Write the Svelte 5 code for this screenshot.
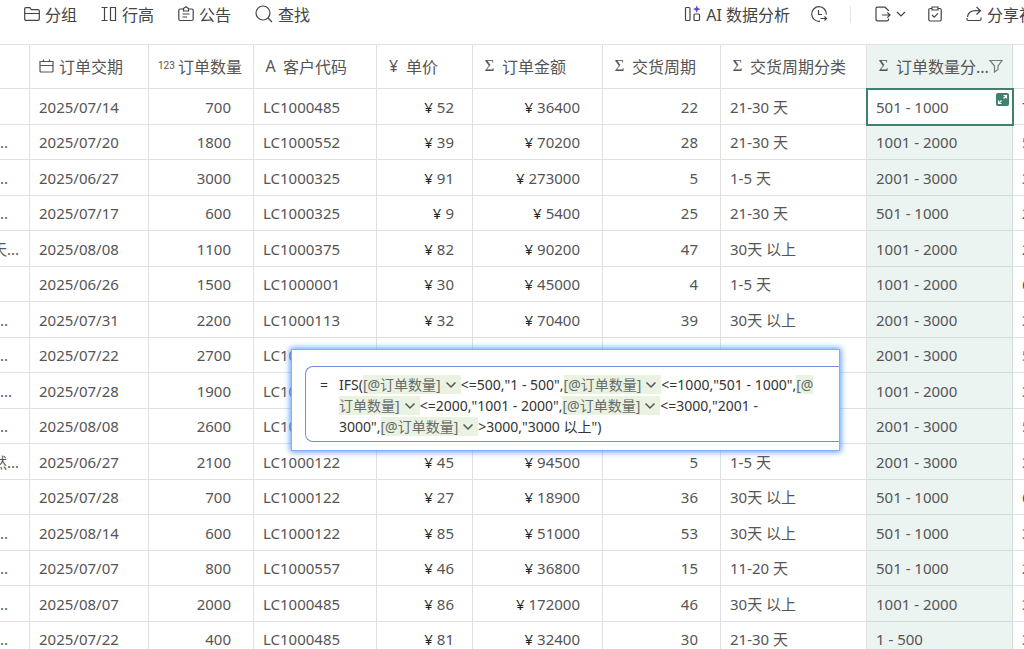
<script>
	// column definitions: kind picks the small glyph in front of the title
	const columns = [
		{ key: 'date', title: '订单交期', kind: 'date' },
		{ key: 'count', title: '订单数量', kind: 'number', align: 'right' },
		{ key: 'client', title: '客户代码', kind: 'text' },
		{ key: 'price', title: '单价', kind: 'money', align: 'right money' },
		{ key: 'total', title: '订单金额', kind: 'formula', align: 'right' },
		{ key: 'cycle', title: '交货周期', kind: 'formula', align: 'right' },
		{ key: 'cycleType', title: '交货周期分类', kind: 'formula' },
		{ key: 'countType', title: '订单数量分...', kind: 'formula', filter: true }
	];

	const glyphs = { number: '123', text: 'A', money: '¥', formula: 'Σ' };

	const fields = ['note', 'date', 'count', 'client', 'price', 'total', 'cycle', 'cycleType', 'countType', 'next'];

	const rows = [
		['', '2025/07/14', '700', 'LC1000485', '¥52', '¥36400', '22', '21-30 天', '501 - 1000', '7'],
		['..', '2025/07/20', '1800', 'LC1000552', '¥39', '¥70200', '28', '21-30 天', '1001 - 2000', '5'],
		['..', '2025/06/27', '3000', 'LC1000325', '¥91', '¥273000', '5', '1-5 天', '2001 - 3000', '3'],
		['..', '2025/07/17', '600', 'LC1000325', '¥9', '¥5400', '25', '21-30 天', '501 - 1000', '2'],
		['天...', '2025/08/08', '1100', 'LC1000375', '¥82', '¥90200', '47', '30天 以上', '1001 - 2000', '2'],
		['', '2025/06/26', '1500', 'LC1000001', '¥30', '¥45000', '4', '1-5 天', '1001 - 2000', '6'],
		['..', '2025/07/31', '2200', 'LC1000113', '¥32', '¥70400', '39', '30天 以上', '2001 - 3000', '3'],
		['..', '2025/07/22', '2700', 'LC1000122', '', '', '', '', '2001 - 3000', '5'],
		['...', '2025/07/28', '1900', 'LC1000122', '', '', '', '', '1001 - 2000', '3'],
		['..', '2025/08/08', '2600', 'LC1000122', '', '', '', '', '2001 - 3000', '5'],
		['然...', '2025/06/27', '2100', 'LC1000122', '¥45', '¥94500', '5', '1-5 天', '2001 - 3000', '3'],
		['', '2025/07/28', '700', 'LC1000122', '¥27', '¥18900', '36', '30天 以上', '501 - 1000', '6'],
		['..', '2025/08/14', '600', 'LC1000122', '¥85', '¥51000', '53', '30天 以上', '501 - 1000', '3'],
		['..', '2025/07/07', '800', 'LC1000557', '¥46', '¥36800', '15', '11-20 天', '501 - 1000', '2'],
		['..', '2025/08/07', '2000', 'LC1000485', '¥86', '¥172000', '46', '30天 以上', '1001 - 2000', '3'],
		['..', '2025/07/22', '400', 'LC1000485', '¥81', '¥32400', '30', '21-30 天', '1 - 500', '3']
	].map((r) => Object.fromEntries(fields.map((f, i) => [f, r[i]])));

	let active = 0;
</script>

{#snippet arrow()}
	<button class="arrow" aria-label="选择字段">
		<svg width="12" height="12" viewBox="0 0 12 12"><path d="M1.5 3.5 6 8l4.500-4.500" /></svg>
	</button>
{/snippet}

<div class="page">
	<header class="toolbar">
		<div class="group tools">
			<button>
				<svg width="16" height="16" viewBox="0 0 16 16"><path d="M.7 13V2.600c0-.7.4-1 1-1h3.700c.5 0 .8.200 1 .6l.8 1.400h6.600c.9 0 1.500.5 1.500 1.400v8c0 .9-.5 1.400-1.400 1.400H2.100C1.200 14.400.7 13.900.7 13zM.7 7.500h14.600" /></svg>
				分组
			</button>
			<button>
				<svg width="16" height="16" viewBox="0 0 16 16"><path d="M.5 1.500h6M3.500 1.500v13M.5 14.500h6M9.500 1.500h5v13h-5z" /></svg>
				行高
			</button>
			<button>
				<svg width="16" height="16" viewBox="0 0 16 16"><path d="M5.500 3H2.300C1.300 3 .8 3.500.8 4.500V13c0 1 .5 1.500 1.500 1.500h11.400c1 0 1.500-.5 1.500-1.500V4.500c0-1-.5-1.500-1.500-1.500h-3.200M5.500 5V2.500L8 .8l2.500 1.700V5zM4.500 8h7M4.500 11h4.500" /></svg>
				公告
			</button>
			<button>
				<svg width="18" height="18" viewBox="0 0 18 18"><circle cx="8" cy="8" r="7" /><path d="m13 13 4 4" /></svg>
				查找
			</button>
		</div>
		<div class="group actions">
			<button class="ai">
				<svg width="18" height="18" viewBox="0 0 18 18"><rect x="1.500" y="2.500" width="4.500" height="13" rx="1" /><rect x="10" y="9" width="5.500" height="6.500" rx="1" /><path class="spark" d="m12.700.5 1.100 2.500 2.700 1.100-2.700 1.100-1.100 2.600-1.100-2.600L9 4.100 11.600 3z" /></svg>
				AI 数据分析
			</button>
			<button class="history" aria-label="历史">
				<svg width="18" height="18" viewBox="0 0 18 18"><path d="M10 16.200A7.300 7.300 0 1 1 16.300 9.500M8.500 5v4.500h3.500M10.500 13.500h6m-2-2 2 2-2 2" /></svg>
			</button>
			<span class="divider"></span>
			<button class="export" aria-label="导出">
				<svg width="16" height="16" viewBox="0 0 16 16"><path d="M13.500 5V4.500L10 1.200H2.500c-.9 0-1.500.5-1.500 1.400v10.800c0 .9.600 1.400 1.500 1.400h9.500c.9 0 1.500-.5 1.500-1.400V12.500M7 9h8m-2.700-2.700L15 9l-2.700 2.700" /></svg>
				<svg width="10" height="10" viewBox="0 0 10 10"><path d="m1 3 4 4 4-4" /></svg>
			</button>
			<button class="check" aria-label="任务">
				<svg width="16" height="16" viewBox="0 0 16 16"><path d="M5 2.500H3.200c-.9 0-1.400.5-1.400 1.400v9.700c0 .9.5 1.400 1.400 1.400h9.600c.9 0 1.400-.5 1.400-1.400V3.900c0-.9-.5-1.400-1.400-1.400H11M5 1h6v3H5zM5 9l2.200 2.200L11 7.300" /></svg>
			</button>
			<button class="share">
				<svg width="16" height="16" viewBox="0 0 16 16"><path d="M10.500 1l4 3.700-4 3.800M14.300 4.700H9.500C5 4.700 2 7 1.500 11M1 12v1.300c0 .8.4 1.200 1.200 1.200h11.600c.8 0 1.200-.4 1.200-1.200V11.500" /></svg>
				分享视图
			</button>
		</div>
	</header>

	<table>
		<colgroup>
			<col class="c-note" />
			<col class="c-date" />
			<col class="c-count" />
			<col class="c-client" />
			<col class="c-price" />
			<col class="c-total" />
			<col class="c-cycle" />
			<col class="c-type" />
			<col class="c-type" />
			<col />
		</colgroup>
		<thead>
			<tr>
				<th></th>
				{#each columns as col}
					<th class:picked={col.filter}>
						<div class="title">
							{#if col.kind === 'date'}
								<svg width="15" height="14" viewBox="0 0 15 14"><path d="M1 2.500h13v9.500c0 .7-.3 1-1 1H2c-.7 0-1-.3-1-1zM1 6.500h13M4.500.5v2M10.500.5v2" /></svg>
							{:else}
								<span class="glyph {col.kind}">{glyphs[col.kind]}</span>
							{/if}
							<span>{col.title}</span>
							{#if col.filter}
								<button class="filter" aria-label="筛选">
									<svg width="14" height="14" viewBox="0 0 14 14"><path d="M1 1.500h12L9 7v3.500L5.500 13V7z" /></svg>
								</button>
							{/if}
						</div>
					</th>
				{/each}
				<th></th>
			</tr>
		</thead>
		<tbody>
			{#each rows as row, i}
				<tr>
					<!-- the tail of a longer text, scrolled out to the left -->
					<td class="note" class:long={/[天然]/.test(row.note)}><div>{row.note}</div></td>
					{#each columns as col}
						<td class={col.align} class:picked={col.filter} class:active={col.filter && i === active}>
							{#if row[col.key][0] === '¥'}
								<span class="yen">¥</span>{row[col.key].slice(1)}
							{:else}
								{row[col.key]}
							{/if}
							{#if col.filter && i === active}
								<button class="expand" aria-label="展开">
									<svg width="13" height="13" viewBox="0 0 13 13"><path d="M7.500 5.500 10.500 2.500M7.500 2.500h3v3M5.500 7.500l-3 3M2.500 7.500v3h3" /></svg>
								</button>
							{/if}
						</td>
					{/each}
					<td class="next">{row.next}</td>
				</tr>
			{/each}
		</tbody>
	</table>

	<!-- formula editor floating over the grid -->
	<div class="popup">
		<div class="editor">
			<span class="equal">=</span>
			<div class="formula" role="textbox" tabindex="0" aria-label="公式">
				IFS(<span class="field">[@订单数量]{@render arrow()}</span>&lt;=500,"1 - 500",<span class="field">[@订单数量]{@render arrow()}</span>&lt;=1000,"501 - 1000",<span class="field">[@<br />订单数量]{@render arrow()}</span>&lt;=2000,"1001 - 2000",<span class="field">[@订单数量]{@render arrow()}</span>&lt;=3000,"2001 -<br />
				3000",<span class="field">[@订单数量]{@render arrow()}</span>&gt;3000,"3000 以上")
			</div>
		</div>
	</div>
</div>

<style>
	:global(body) {
		margin: 0;
		overflow: hidden;
		background: #fff;
	}

	.page {
		position: relative;
		height: 100vh;
		overflow: hidden;
		font-family: "Noto Sans", "Noto Sans CJK SC", sans-serif;
		font-size: 15px;
		color: #555;
	}

	button {
		display: inline-flex;
		align-items: center;
		padding: 0;
		border: 0;
		background: none;
		color: inherit;
		font: inherit;
		cursor: pointer;
	}

	svg {
		flex: none;
		fill: none;
		stroke: currentColor;
		stroke-width: 1.2;
	}

	/* toolbar */
	.toolbar {
		display: flex;
		justify-content: space-between;
		height: 28px;
		/* the last action runs past the right edge */
		margin-right: -27px;
		padding: 0 0 16px 24px;
		color: #444;
		font-size: 16px;
		white-space: nowrap;
	}

	.group {
		display: flex;
		align-items: center;
	}

	.group button {
		gap: 5px;
	}

	.group .ai {
		gap: 4px;
	}

	.tools {
		gap: 24px;
	}

	.history {
		margin-left: 20px;
	}

	.divider {
		width: 1px;
		height: 17px;
		margin: 0 24px 0 22px;
		background: #e4e4e4;
	}

	.check {
		margin: 0 23px 0 21px;
	}

	.spark {
		fill: #6a3de8;
		stroke: none;
	}

	/* grid */
	table {
		width: 100%;
		table-layout: fixed;
		border-collapse: separate;
		border-spacing: 0;
		border-top: 1px solid #e2e2e2;
	}

	.c-note { width: 30px; }
	.c-date { width: 119px; }
	.c-count { width: 105px; }
	.c-client { width: 123px; }
	.c-price { width: 96px; }
	.c-total { width: 130px; }
	.c-cycle { width: 118px; }
	.c-type { width: 146px; }

	th,
	td {
		box-sizing: border-box;
		padding: 0 9px;
		border-right: 1px solid #e0e0e0;
		border-bottom: 1px solid #e0e0e0;
		font-weight: 400;
		text-align: left;
		white-space: nowrap;
		overflow: hidden;
	}

	th {
		height: 44px;
		padding-bottom: 2px;
		font-size: 16px;
	}

	td {
		height: 36px;
		line-height: 20px;
	}

	tr:nth-child(even) td {
		height: 35px;
	}

	th:last-child,
	td:last-child {
		border-right: 0;
	}

	.title {
		display: flex;
		align-items: center;
		gap: 5px;
	}

	.glyph {
		flex: none;
		width: 15px;
		text-align: center;
	}

	.glyph.number {
		font-family: Roboto, sans-serif;
		font-size: 10px;
	}

	.glyph.formula {
		font-family: "Liberation Serif", serif;
		font-size: 17px;
		line-height: 16px;
	}

	.right {
		padding-right: 22px;
		text-align: right;
	}

	.right.money {
		padding-right: 18px;
	}

	.yen {
		margin-right: 4px;
		color: #222;
	}

	.picked {
		background: #ebf4f1;
		border-color: #d3dcd9;
	}

	.active {
		position: relative;
		background: #fff;
		outline: 2px solid #40806f;
		outline-offset: -1px;
		overflow: visible;
	}

	.expand {
		position: absolute;
		top: 4px;
		right: 3px;
		border-radius: 2px;
		background: #40806f;
		color: #fff;
	}

	.filter {
		margin-left: -5px;
		color: #777;
	}

	.note {
		padding: 0;
	}

	.note.long {
		padding-right: 10px;
	}

	.note.long div {
		display: flex;
		justify-content: flex-end;
	}

	.next {
		padding-right: 0;
	}

	/* formula popup */
	.popup {
		position: absolute;
		top: 350px;
		left: 292px;
		box-sizing: border-box;
		width: 547px;
		padding: 16px 0 8px 13px;
		background: #fff;
		box-shadow: 0 0 0 1px #7fb2fb, 0 0 6px 2px #5a9cff;
	}

	.editor {
		display: flex;
		gap: 11px;
		padding: 7px 0 4px 14px;
		border: 1px solid #6f8fd8;
		border-right: 0;
		border-radius: 8px 0 0 8px;
		color: #333;
		font-size: 14px;
		line-height: 21px;
	}

	.formula {
		white-space: nowrap;
		outline: none;
	}

	.field {
		background: #eaf2e2;
		color: #666a6a;
	}

	.arrow {
		padding: 0 4px;
		vertical-align: -1px;
	}

	.arrow svg {
		stroke: #555;
		stroke-width: 1.5;
	}
</style>
